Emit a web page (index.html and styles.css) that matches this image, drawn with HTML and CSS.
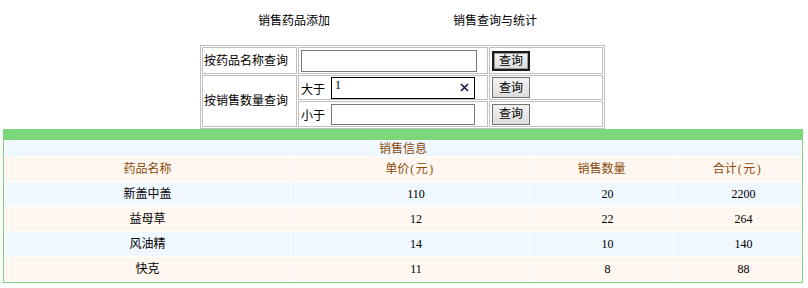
FILE: index.html
```html
<!DOCTYPE html>
<html>
<head>
  <meta charset="utf-8" />
  <title>销售查询与统计</title>
  <link rel="stylesheet" href="styles.css">
</head>
<body>
  <div class="page">
    <div class="nav">
      <a href="#">销售药品添加</a>
      <a href="#">销售查询与统计</a>
    </div>

    <table class="query">
      <colgroup>
        <col class="c-label">
        <col class="c-field">
        <col class="c-btn">
      </colgroup>
      <tr class="row-name">
        <td class="q-label">按药品名称查询</td>
        <td class="q-field"><input type="text" class="txt txt-wide"></td>
        <td class="q-btn"><button class="btn btn-default">查询</button></td>
      </tr>
      <tr class="row-min">
        <td class="q-label" rowspan="2">按销售数量查询</td>
        <td class="q-field">
          <div class="range">
            <span class="range-label">大于</span>
            <span class="clearable">
              <input type="text" class="txt txt-num txt-focus" value="1">
              <svg class="clear-icon" viewBox="0 0 9 9">
                <path d="M1 1L8 8M8 1L1 8"/>
              </svg>
            </span>
          </div>
        </td>
        <td class="q-btn"><button class="btn">查询</button></td>
      </tr>
      <tr class="row-max">
        <td class="q-field">
          <div class="range">
            <span class="range-label">小于</span>
            <input type="text" class="txt txt-num txt-short">
          </div>
        </td>
        <td class="q-btn"><button class="btn">查询</button></td>
      </tr>
    </table>

    <div class="sales">
      <table class="sales-table">
        <colgroup>
          <col class="s-name">
          <col class="s-price">
          <col class="s-count">
          <col class="s-total">
        </colgroup>
        <tr class="title"><td colspan="4">销售信息</td></tr>
        <tr class="head">
          <td>药品名称</td>
          <td>单价<span class="unit">(元)</span></td>
          <td>销售数量</td>
          <td>合计<span class="unit">(元)</span></td>
        </tr>
        <tr class="odd">
          <td>新盖中盖</td>
          <td class="num">110</td>
          <td class="num">20</td>
          <td class="num">2200</td>
        </tr>
        <tr class="even">
          <td>益母草</td>
          <td class="num">12</td>
          <td class="num">22</td>
          <td class="num">264</td>
        </tr>
        <tr class="odd">
          <td>风油精</td>
          <td class="num">14</td>
          <td class="num">10</td>
          <td class="num">140</td>
        </tr>
        <tr class="even">
          <td>快克</td>
          <td class="num">11</td>
          <td class="num">8</td>
          <td class="num">88</td>
        </tr>
      </table>
    </div>
  </div>
</body>
</html>
```

FILE: styles.css
```css
:root {
  --green: #7cd77a;
  --blue-row: #eff7ff;
  --cream-row: #fff7f0;
  --brown: #8a4a0a;
  --grey-line: #c0c0c0;
}

* {
  margin: 0;
  padding: 0;
  box-sizing: border-box;
  font-family: "Liberation Serif", "Noto Sans CJK SC", serif;
}

body {
  background: white;
  color: #000;
  font-size: 12px;
  line-height: 14px;
}

.page {
  width: 805px;
}

/* top links */
.nav {
  display: flex;
  gap: 123px;
  padding: 14px 0 0 258px;
  height: 45px;
}

.nav a {
  color: #000;
  text-decoration: none;
  font-size: 12px;
  line-height: 14px;
}

/* query form */
.query {
  width: 405px;
  margin: 0 auto;
  table-layout: fixed;
  border: 1px solid var(--grey-line);
  border-spacing: 1px;
}

.c-label { width: 95px; }
.c-field { width: 190px; }
.c-btn { width: 114px; }

.query td {
  border: 1px solid var(--grey-line);
  vertical-align: middle;
  font-size: 12px;
}

.row-name td { height: 27px; }
.row-min td { height: 25px; }
.row-max td { height: 26px; }

.q-label {
  padding: 0 1px;
  white-space: nowrap;
}

.q-field {
  padding: 0 2px;
}

.q-btn {
  padding: 0 2px;
}

.range {
  display: flex;
  align-items: flex-end;
  gap: 6px;
}

.range-label {
  padding-bottom: 2px;
  line-height: 14px;
}

.txt {
  display: block;
  height: 22px;
  border: 1px solid #7a7a7a;
  padding: 1px 3px 5px;
  font-size: 12px;
  line-height: 14px;
  background: white;
  outline: none;
}

.txt-wide { width: 176px; }
.txt-num { width: 144px; }
.txt-short { height: 21px; }
.txt-focus { border-color: #000; }

.clearable {
  position: relative;
  display: block;
}

.clear-icon {
  position: absolute;
  right: 6px;
  top: 6px;
  width: 9px;
  height: 9px;
  stroke: #1c1c3c;
  stroke-width: 1.7;
  fill: none;
}

.btn {
  display: block;
  width: 38px;
  height: 21px;
  border: 1px solid #707070;
  background: linear-gradient(#f4f4f4, #dcdcdc);
  font-size: 12px;
  line-height: 14px;
  color: #000;
  cursor: pointer;
}

.btn-default {
  height: 20px;
  border: 2px solid #1a1a1a;
  box-shadow: inset 0 0 0 1px #9a9a9a;
}

/* sales info */
.sales {
  width: 800px;
  margin-left: 3px;
  border: 1px solid var(--green);
  border-top-width: 11px;
}

.sales-table {
  width: 100%;
  table-layout: fixed;
  border-spacing: 1px;
}

.s-name { width: 285px; }
.s-price { width: 238px; }
.s-count { width: 143px; }
.s-total { width: 127px; }

.sales-table td {
  text-align: center;
  vertical-align: middle;
  height: 24px;
  font-size: 12px;
  padding: 0;
}

.sales-table .title td {
  height: 15px;
  background: var(--blue-row);
  color: var(--brown);
}

.head td {
  background: var(--cream-row);
  color: var(--brown);
}

.unit {
  letter-spacing: 1.5px;
  padding-left: 1px;
}

.odd td { background: var(--blue-row); }
.even td { background: var(--cream-row); }

.sales-table .num {
  padding-left: 12px;
}
```
